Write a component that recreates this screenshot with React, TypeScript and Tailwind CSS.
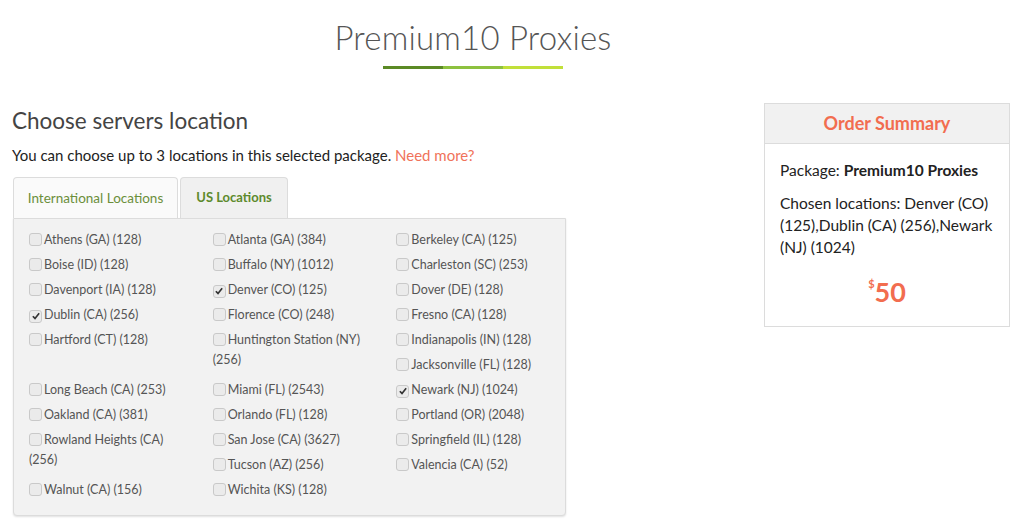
import React from "react";

type Loc = { name: string; checked?: boolean };

const locations: Loc[] = [
  { name: "Athens (GA) (128)" },
  { name: "Atlanta (GA) (384)" },
  { name: "Berkeley (CA) (125)" },
  { name: "Boise (ID) (128)" },
  { name: "Buffalo (NY) (1012)" },
  { name: "Charleston (SC) (253)" },
  { name: "Davenport (IA) (128)" },
  { name: "Denver (CO) (125)", checked: true },
  { name: "Dover (DE) (128)" },
  { name: "Dublin (CA) (256)", checked: true },
  { name: "Florence (CO) (248)" },
  { name: "Fresno (CA) (128)" },
  { name: "Hartford (CT) (128)" },
  { name: "Huntington Station (NY) (256)" },
  { name: "Indianapolis (IN) (128)" },
  { name: "Jacksonville (FL) (128)" },
  { name: "Long Beach (CA) (253)" },
  { name: "Miami (FL) (2543)" },
  { name: "Newark (NJ) (1024)", checked: true },
  { name: "Oakland (CA) (381)" },
  { name: "Orlando (FL) (128)" },
  { name: "Portland (OR) (2048)" },
  { name: "Rowland Heights (CA) (256)" },
  { name: "San Jose (CA) (3627)" },
  { name: "Springfield (IL) (128)" },
  { name: "Tucson (AZ) (256)" },
  { name: "Valencia (CA) (52)" },
  { name: "Walnut (CA) (156)" },
  { name: "Wichita (KS) (128)" },
];

const Checkbox = ({ checked }: { checked?: boolean }) => (
  <span className="inline-flex items-center justify-center w-[13px] h-[13px] mr-[2px] align-[-2px] rounded-[3px] border border-[#c9c9c9] bg-[#ebebeb]">
    {checked && (
      <svg viewBox="0 0 12 12" className="w-[10px] h-[10px]">
        <path d="M2.2 6.3 L4.8 8.9 L9.8 2.8" fill="none" stroke="#333" strokeWidth="2" />
      </svg>
    )}
  </span>
);

const App = () => {
  return (
    <div className="w-[1024px] h-[530px] bg-white overflow-hidden font-['Lato',sans-serif]">
      <div className="w-[946px] pt-[15px] flex flex-col items-center">
        <h1 className="text-[33px] font-light text-[#555] leading-[44px] tracking-[0.2px]">
          Premium10 Proxies
        </h1>
        <div className="mt-[7px] flex h-[3px]">
          <span className="w-[60px] bg-[#5b8a25]" />
          <span className="w-[60px] bg-[#8dc13f]" />
          <span className="w-[60px] bg-[#c1e03a]" />
        </div>
      </div>

      <div className="flex mt-[37px]">
        <div className="ml-[12px] w-[554px]">
          <h2 className="text-[22.5px] text-[#444] leading-[30px]">Choose servers location</h2>
          <p className="mt-[9px] text-[15px] text-[#222] leading-[20px]">
            You can choose up to 3 locations in this selected package.{" "}
            <span className="text-[#f0735a]">Need more?</span>
          </p>

          <div className="mt-[12px] ml-[1px] flex gap-[2px] h-[41px] items-end">
            <div className="h-[41px] w-[165px] flex items-center justify-center border border-b-0 border-[#dcdcdc] rounded-t-[4px] bg-[#fafafa] text-[13.5px] text-[#6b8f3b]">
              International Locations
            </div>
            <div className="h-[41px] w-[108px] flex items-center justify-center border border-b-0 border-[#dcdcdc] rounded-t-[4px] bg-[#f0f0f0] text-[13px] font-bold text-[#5d8a2c]">
              US Locations
            </div>
          </div>

          <div className="ml-[1px] w-[553px] flow-root border border-[#dcdcdc] rounded-b-[4px] bg-[#f2f2f2] pt-[11px] pb-[10px] shadow-[0_1px_2px_rgba(0,0,0,0.12)]">
            {locations.map((l) => (
              <div
                key={l.name}
                className="float-left w-1/3 px-[15px] mb-[5px] text-[12.5px] leading-[20px] text-[#555]"
              >
                <Checkbox checked={l.checked} />
                {l.name}
              </div>
            ))}
          </div>
        </div>

        <div className="ml-auto mr-[14px] -mt-[3px] w-[246px] h-[224px] border border-[#dcdcdc] self-start">
          <div className="h-[40px] bg-[#f1f1f1] border-b border-[#dcdcdc] flex items-center justify-center text-[18px] font-bold text-[#f26d4f]">
            Order Summary
          </div>
          <div className="px-[15px] pt-[15px] text-[15.5px] text-[#222] leading-[22px]">
            <p>
              Package: <span className="font-bold">Premium10 Proxies</span>
            </p>
            <p className="mt-[11px]">
              Chosen locations: Denver (CO) (125),Dublin (CA) (256),Newark (NJ) (1024)
            </p>
            <p className="mt-[9px] text-center font-bold text-[#f26d4f] leading-[34px]">
              <span className="text-[11px] align-[14px]">$</span>
              <span className="text-[27px]">50</span>
            </p>
          </div>
        </div>
      </div>
    </div>
  );
};

export default App;
